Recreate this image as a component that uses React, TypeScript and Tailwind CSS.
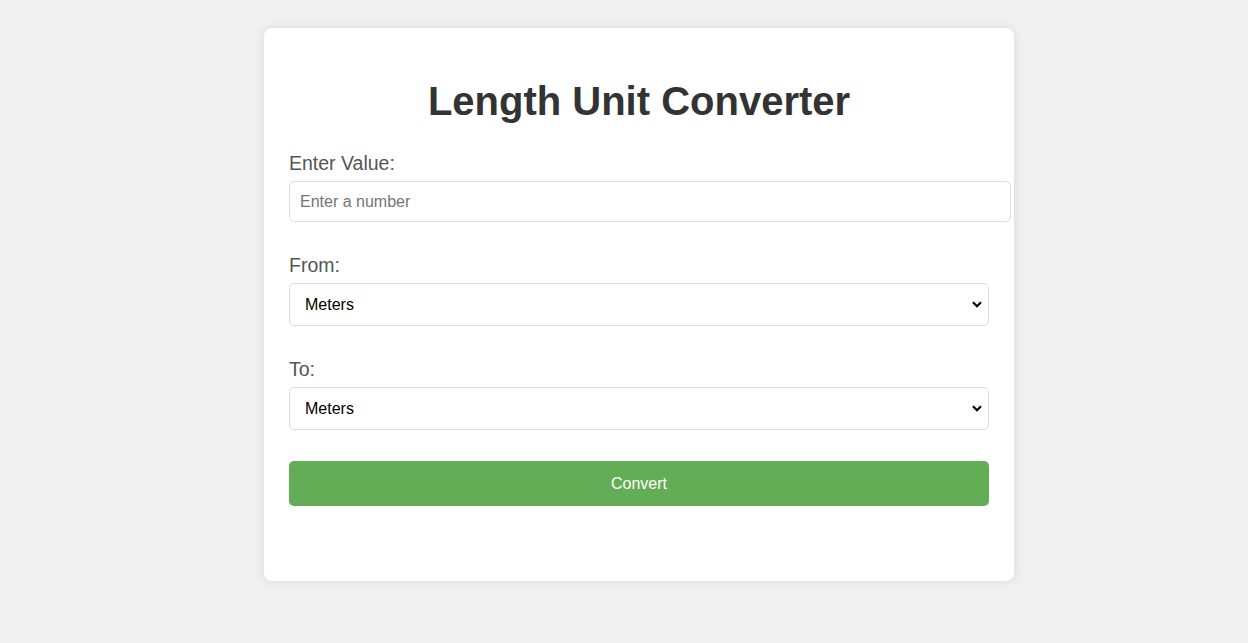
export default function App() {
  const units = ["Meters", "Kilometers", "Centimeters", "Millimeters", "Miles", "Yards", "Feet", "Inches"];

  const UnitSelect = ({ className }: { className: string }) => (
    <div className={"relative " + className}>
      <select className="block w-full h-[43px] pl-[15px] pr-[30px] text-[16px] text-black border border-[#ddd] rounded-[5px] appearance-none bg-white">
        {units.map((u) => (
          <option key={u}>{u}</option>
        ))}
      </select>
      <svg
        className="absolute right-[7px] top-[18px] pointer-events-none"
        width="10"
        height="7"
        viewBox="0 0 10 7"
        fill="none"
      >
        <path d="M1 1.2 L5 5.2 L9 1.2" stroke="#000" strokeWidth="2.2" />
      </svg>
    </div>
  );

  return (
    <div className="min-h-screen bg-[#f0f0f0] flex justify-center items-start pl-[30px] pt-[28px] font-['Liberation_Sans',Arial,sans-serif]">
      <div className="w-[750px] bg-white rounded-[8px] shadow-[0_0_10px_rgba(0,0,0,0.1)] pt-[50px] pb-[75px] px-[25px]">
        <h1 className="text-center text-[40px] leading-[46px] font-bold text-[#333] mb-[28px]">Length Unit Converter</h1>

        <label className="block text-[19.5px] leading-[22px] text-[#555] mb-[7px]">Enter Value:</label>
        <input
          type="number"
          placeholder="Enter a number"
          className="block w-[722px] h-[41px] px-[10px] text-[16px] border border-[#ddd] rounded-[5px] placeholder:text-[#757575] mb-[32px]"
        />

        <label className="block text-[19.5px] leading-[22px] text-[#555] mb-[7px]">From:</label>
        <UnitSelect className="mb-[32px]" />

        <label className="block text-[19.5px] leading-[22px] text-[#555] mb-[7px]">To:</label>
        <UnitSelect className="mb-[31px]" />

        <button className="block w-full h-[45px] bg-[#62ad55] text-white text-[16px] rounded-[5px]">Convert</button>
      </div>
    </div>
  );
}
